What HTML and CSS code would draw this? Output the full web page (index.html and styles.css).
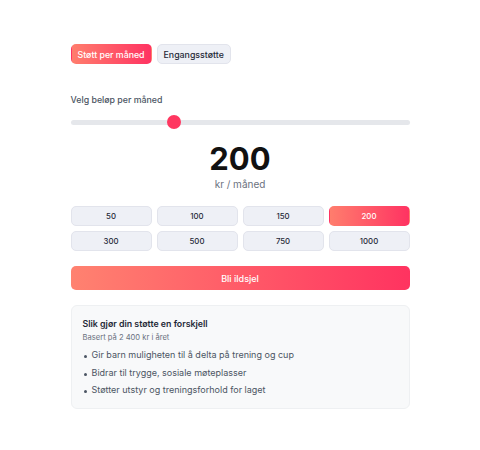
FILE: index.html
```html
<!DOCTYPE html>
<html lang="no">
<head>
<meta charset="utf-8">
<link rel="stylesheet" href="styles.css">
</head>
<body>
<div class="wrap">
  <div class="tabs">
    <button class="tab active">Støtt per måned</button>
    <button class="tab">Engangsstøtte</button>
  </div>
  <div class="label">Velg beløp per måned</div>
  <div class="slider">
    <div class="track"></div>
    <div class="thumb" style="left: 30.6%"></div>
  </div>
  <div class="amount">200</div>
  <div class="unit">kr / måned</div>
  <div class="grid">
    <button class="opt">50</button>
    <button class="opt">100</button>
    <button class="opt">150</button>
    <button class="opt active">200</button>
    <button class="opt">300</button>
    <button class="opt">500</button>
    <button class="opt">750</button>
    <button class="opt">1000</button>
  </div>
  <button class="cta">Bli ildsjel</button>
  <div class="card">
    <div class="card-title">Slik gjør din støtte en forskjell</div>
    <div class="card-sub">Basert på 2 400 kr i året</div>
    <ul class="list">
      <li>Gir barn muligheten til å delta på trening og cup</li>
      <li>Bidrar til trygge, sosiale møteplasser</li>
      <li>Støtter utstyr og treningsforhold for laget</li>
    </ul>
  </div>
</div>
</body>
</html>
```
FILE: styles.css
```css
* { box-sizing: border-box; }
body {
  margin: 0;
  background: #fff;
  font-family: Inter, "Noto Sans", sans-serif;
  color: #111827;
}
.wrap {
  width: 339px;
  margin: 0 auto;
  padding-top: 44px;
}
button { font-family: inherit; cursor: pointer; }
.tabs { display: flex; gap: 5px; }
.tab {
  height: 20px;
  padding: 0 6px;
  border-radius: 5px;
  border: 1px solid #e2e4ec;
  background: #eef0f6;
  color: #1f2937;
  font-size: 8.8px;
  font-weight: 500;
}
.tab.active {
  border-color: transparent;
  color: #fff;
  background: linear-gradient(90deg, #ff7d6d, #ff3362);
}
.label {
  margin-top: 29px;
  font-size: 8.8px;
  line-height: 14px;
  font-weight: 500;
  color: #4b5563;
}
.slider {
  position: relative;
  height: 14px;
  margin-top: 8px;
  display: flex;
  align-items: center;
}
.track {
  width: 100%;
  height: 5px;
  border-radius: 3px;
  background: #e5e7eb;
}
.thumb {
  position: absolute;
  top: 0;
  width: 14px;
  height: 14px;
  border-radius: 50%;
  background: #ff3760;
  transform: translateX(-50%);
}
.amount {
  margin-top: 11px;
  text-align: center;
  font-size: 31px;
  line-height: 38px;
  font-weight: 700;
  color: #111;
}
.unit {
  text-align: center;
  font-size: 10px;
  line-height: 13px;
  color: #6b7280;
}
.grid {
  margin-top: 15px;
  display: grid;
  grid-template-columns: repeat(4, 1fr);
  gap: 5px;
}
.opt {
  height: 20px;
  border-radius: 5px;
  border: 1px solid #e2e4ec;
  background: #eef0f6;
  color: #1f2937;
  font-size: 7.8px;
  font-weight: 500;
}
.opt.active {
  border-color: transparent;
  color: #fff;
  background: linear-gradient(90deg, #ff7d6d, #ff3362);
}
.cta {
  display: block;
  width: 100%;
  margin-top: 15px;
  height: 24px;
  border: none;
  border-radius: 5px;
  color: #fff;
  font-size: 9px;
  font-weight: 500;
  background: linear-gradient(90deg, #ff8270, #ff3360);
}
.card {
  margin-top: 15px;
  padding: 11px 11px 9px;
  border-radius: 6px;
  border: 1px solid #eef0f2;
  background: #f8f9fa;
}
.card-title {
  font-size: 8.8px;
  line-height: 14px;
  font-weight: 600;
  color: #1f2937;
}
.card-sub {
  font-size: 7.6px;
  line-height: 12px;
  color: #6b7280;
  margin-top: 1px;
}
.list {
  list-style: none;
  margin: 2px 0 0;
  padding: 0;
}
.list li {
  position: relative;
  padding-left: 9px;
  font-size: 9px;
  line-height: 17.5px;
  color: #4b5563;
}
.list li::before {
  content: "";
  position: absolute;
  left: 1px;
  top: 9px;
  width: 3px;
  height: 3px;
  border-radius: 50%;
  background: #4b5563;
}
```
